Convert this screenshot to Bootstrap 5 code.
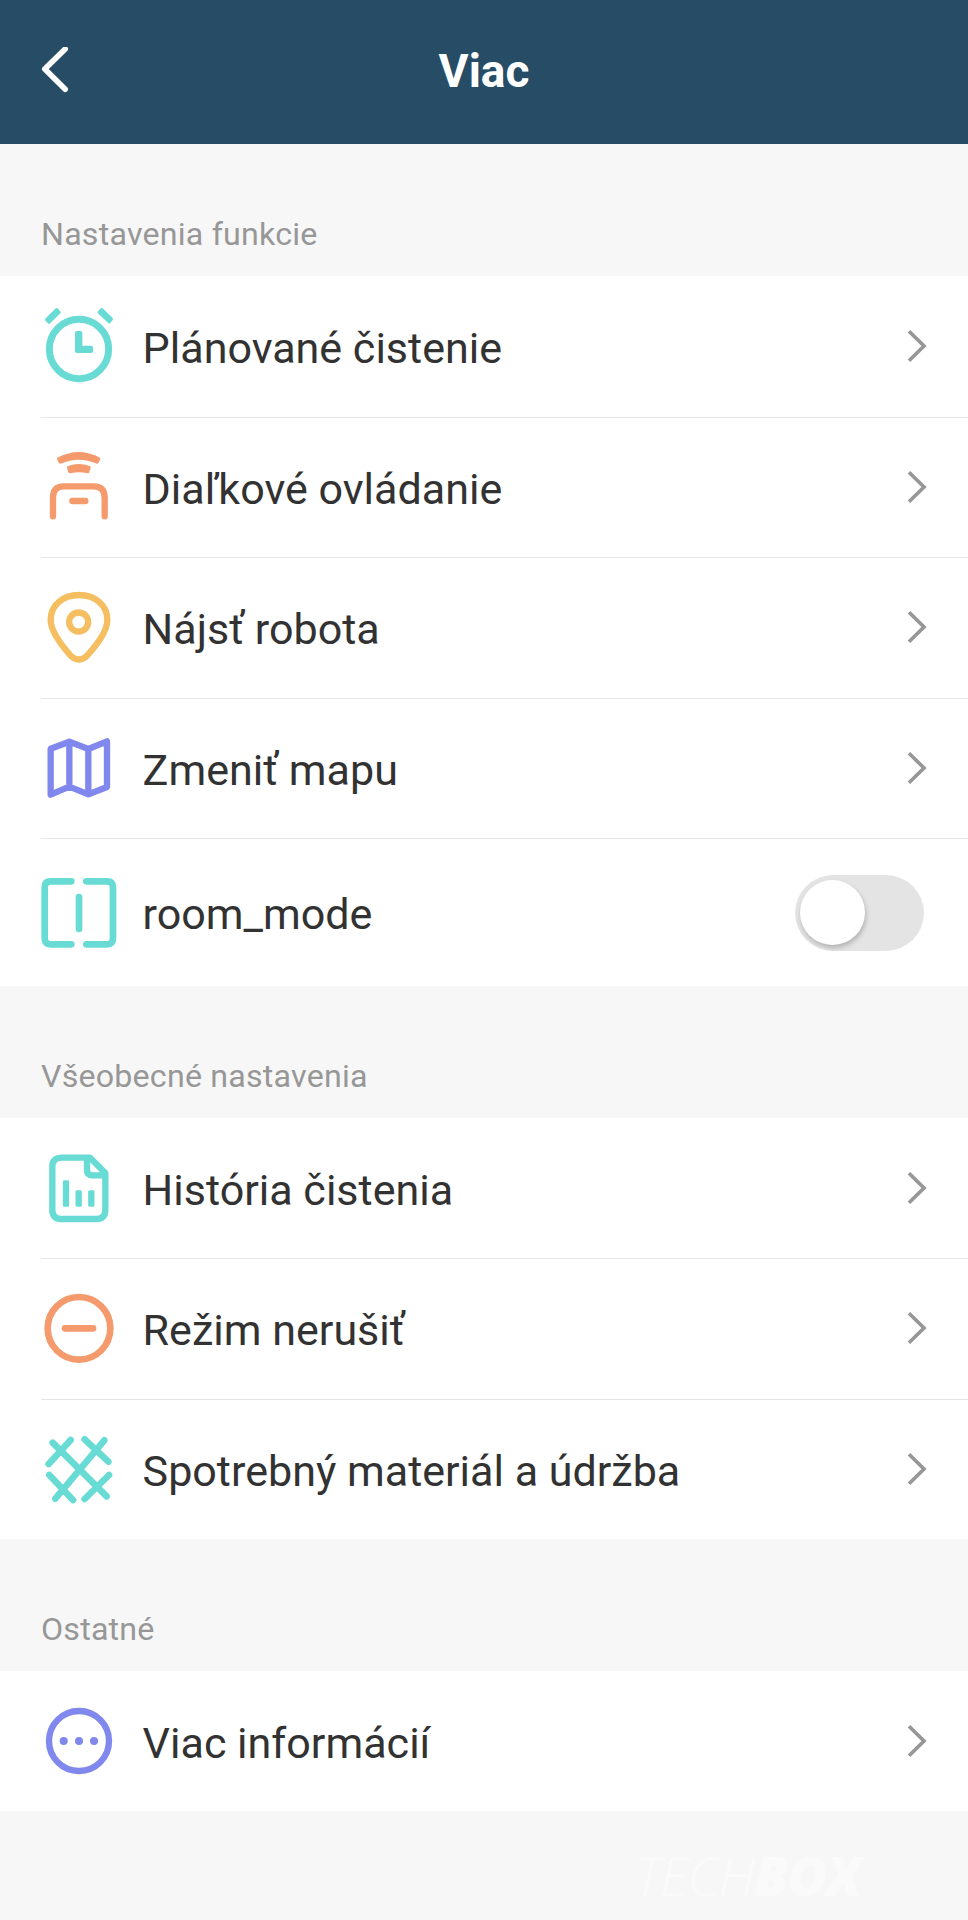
<!DOCTYPE html>
<html lang="sk">
<head>
<meta charset="utf-8">
<meta name="viewport" content="width=device-width, initial-scale=1">
<title>Viac</title>
<link rel="stylesheet" href="https://cdn.jsdelivr.net/npm/bootstrap@5.3.0/dist/css/bootstrap.min.css">
<style>
  body { background: #f7f7f7; font-family: Roboto, sans-serif; color: #323232; overflow-x: hidden; }
  .topbar { height: 144px; background: #274d66; display: grid; grid-template-columns: 1fr auto 1fr; padding: 0 41px; }
  .topbar h1 { font-size: 46px; font-weight: 700; line-height: 1; padding-bottom: 2px; }
  .group-title { height: 131.5px; padding: 0 41px 23px; font-size: 32.2px; line-height: 38px; color: #979797; letter-spacing: .2px; }
  .topbar + main > .group-title:first-child { height: 132px; }
  .menu-row { height: 140.5px; margin-left: 41px; padding-right: 41px; box-shadow: 0 1px #e6e6e6; }
  .menu-row:last-child { box-shadow: none; }
  .menu-row.tall { height: 148px; }
  .menu-text { margin-left: 25.6px; font-size: 43.05px; line-height: 50px; padding-top: 5.5px; }
  .ico { width: 76px; height: 76px; overflow: visible; fill: none; stroke: currentColor; stroke-linecap: round; stroke-linejoin: round; flex: none; }
  .solid { fill: currentColor; }
  .teal { color: #68dbd5; }
  .orange { color: #f59a6c; }
  .amber { color: #f5be60; }
  .violet { color: #8088ee; }
  .chev { width: 20px; height: 34px; fill: none; stroke: #979797; stroke-width: 3.7; }
  .toggle { width: 129px; height: 75.5px; background: #e4e4e4; padding: 5.2px; margin: 2px 3px 0 0; }
  .knob { width: 65px; height: 65px; box-shadow: 1px 3px 5px rgba(0,0,0,.22); }
  .brand-mark { font: italic 300 54px/1 "Open Sans", sans-serif; color: #fafafa; margin: 37px 107px 0 0; letter-spacing: -1px; }
  .brand-mark b { font-weight: 800; }
</style>
</head>
<body>
<header class="topbar align-items-center">
  <svg width="29" height="50" viewBox="0 0 29 50" fill="none" stroke="#fff" stroke-width="5.6" stroke-linecap="round" stroke-linejoin="round"><path d="M24.2 2 3.8 22 24.2 42.2"/></svg>
  <h1 class="m-0 text-white">Viac</h1>
</header>

<main>
  <h2 class="group-title d-flex align-items-end m-0 fw-normal">Nastavenia funkcie</h2>
  <section class="bg-white">
    <div class="menu-row d-flex align-items-center">
      <svg class="ico teal" viewBox="33 54 228 228"><circle cx="147" cy="177" r="89" stroke-width="21"/><path class="solid" d="M140 128h12v44h32v12h-44z" stroke-width="10"/><path class="solid" d="M50 89 57 96 87 67 80 59ZM208 67 215 59 244 87 238 95Z" stroke-width="10"/></svg>
      <span class="menu-text">Plánované čistenie</span>
      <svg class="chev ms-auto" viewBox="0 0 20 34"><path d="M2 2.2 17 17 2 31.8"/></svg>
    </div>
    <div class="menu-row d-flex align-items-center">
      <svg class="ico orange" viewBox="33 476 228 228" stroke-width="19"><path d="M69 678v-56q0-34 32-34h90q33 0 33 34v56M127 632h39"/><path class="solid" d="M86 506Q147 474 206 506L201 515Q147 491 91 515ZM116 532Q147 520 177 532L173 544Q147 537 120 544Z" stroke-width="10"/></svg>
      <span class="menu-text">Diaľkové ovládanie</span>
      <svg class="chev ms-auto" viewBox="0 0 20 34"><path d="M2 2.2 17 17 2 31.8"/></svg>
    </div>
    <div class="menu-row d-flex align-items-center">
      <svg class="ico amber" viewBox="33 58 228 228" stroke-width="19"><path d="M147 76C97 76 62 108 62 150C62 188 98 231 124 260Q147 279 169 260C196 231 232 188 232 150C232 108 197 76 147 76Z"/><circle cx="146" cy="157" r="28.5"/></svg>
      <span class="menu-text">Nájsť robota</span>
      <svg class="chev ms-auto" viewBox="0 0 20 34"><path d="M2 2.2 17 17 2 31.8"/></svg>
    </div>
    <div class="menu-row d-flex align-items-center">
      <svg class="ico violet" viewBox="33 479 228 228" stroke-width="19"><path d="M62 535 118 514 175 536 231 513V650L175 672 118 649 62 673ZM118 514V649M175 536V672"/></svg>
      <span class="menu-text">Zmeniť mapu</span>
      <svg class="chev ms-auto" viewBox="0 0 20 34"><path d="M2 2.2 17 17 2 31.8"/></svg>
    </div>
    <div class="menu-row tall d-flex align-items-center">
      <svg class="ico teal" viewBox="33 162 228 228" stroke-width="20"><path d="M124 184H62q-18 0-18 18V355q0 18 18 18h62M169 184h62q18 0 18 18V355q0 18-18 18H169M147 231v96"/></svg>
      <span class="menu-text">room_mode</span>
      <div class="toggle rounded-pill ms-auto" role="switch" aria-checked="false"><div class="knob bg-white rounded-circle"></div></div>
    </div>
  </section>

  <h2 class="group-title d-flex align-items-end m-0 fw-normal">Všeobecné nastavenia</h2>
  <section class="bg-white">
    <div class="menu-row d-flex align-items-center">
      <svg class="ico teal" viewBox="33 59 228 228" stroke-width="19"><path d="M180 82H94Q67 84 67 108V239Q67 266 94 266H198Q226 266 226 239V128ZM171 84V119Q171 135 187 135H224"/><path class="solid" d="M103 154h10v71h-10zM141 184h10v41h-10zM179 184h10v41h-10z" stroke-width="9"/></svg>
      <span class="menu-text">História čistenia</span>
      <svg class="chev ms-auto" viewBox="0 0 20 34"><path d="M2 2.2 17 17 2 31.8"/></svg>
    </div>
    <div class="menu-row d-flex align-items-center">
      <svg class="ico orange" viewBox="33 481 228 228" stroke-width="20"><circle cx="147" cy="596" r="94"/><path d="M105 596h84"/></svg>
      <span class="menu-text">Režim nerušiť</span>
      <svg class="chev ms-auto" viewBox="0 0 20 34"><path d="M2 2.2 17 17 2 31.8"/></svg>
    </div>
    <div class="menu-row d-flex align-items-center">
      <svg class="ico teal" viewBox="33 92 228 228" stroke-width="20"><path d="M68 127 230 288M223 120 76 295M122 119 56 191M164 117 235 184M58 224 129 299M237 224 164 296"/></svg>
      <span class="menu-text">Spotrebný materiál a údržba</span>
      <svg class="chev ms-auto" viewBox="0 0 20 34"><path d="M2 2.2 17 17 2 31.8"/></svg>
    </div>
  </section>

  <h2 class="group-title d-flex align-items-end m-0 fw-normal">Ostatné</h2>
  <section class="bg-white">
    <div class="menu-row d-flex align-items-center">
      <svg class="ico violet" viewBox="33 98 228 228"><circle cx="147" cy="212" r="90" stroke-width="19"/><path d="M101 212h.1M147 212h.1M192 212h.1" stroke-width="24"/></svg>
      <span class="menu-text">Viac informácií</span>
      <svg class="chev ms-auto" viewBox="0 0 20 34"><path d="M2 2.2 17 17 2 31.8"/></svg>
    </div>
  </section>
</main>
<footer class="d-flex justify-content-end">
  <div class="brand-mark">TECH<b>BOX</b></div>
</footer>
<script src="https://cdn.jsdelivr.net/npm/bootstrap@5.3.0/dist/js/bootstrap.bundle.min.js"></script>
</body>
</html>
